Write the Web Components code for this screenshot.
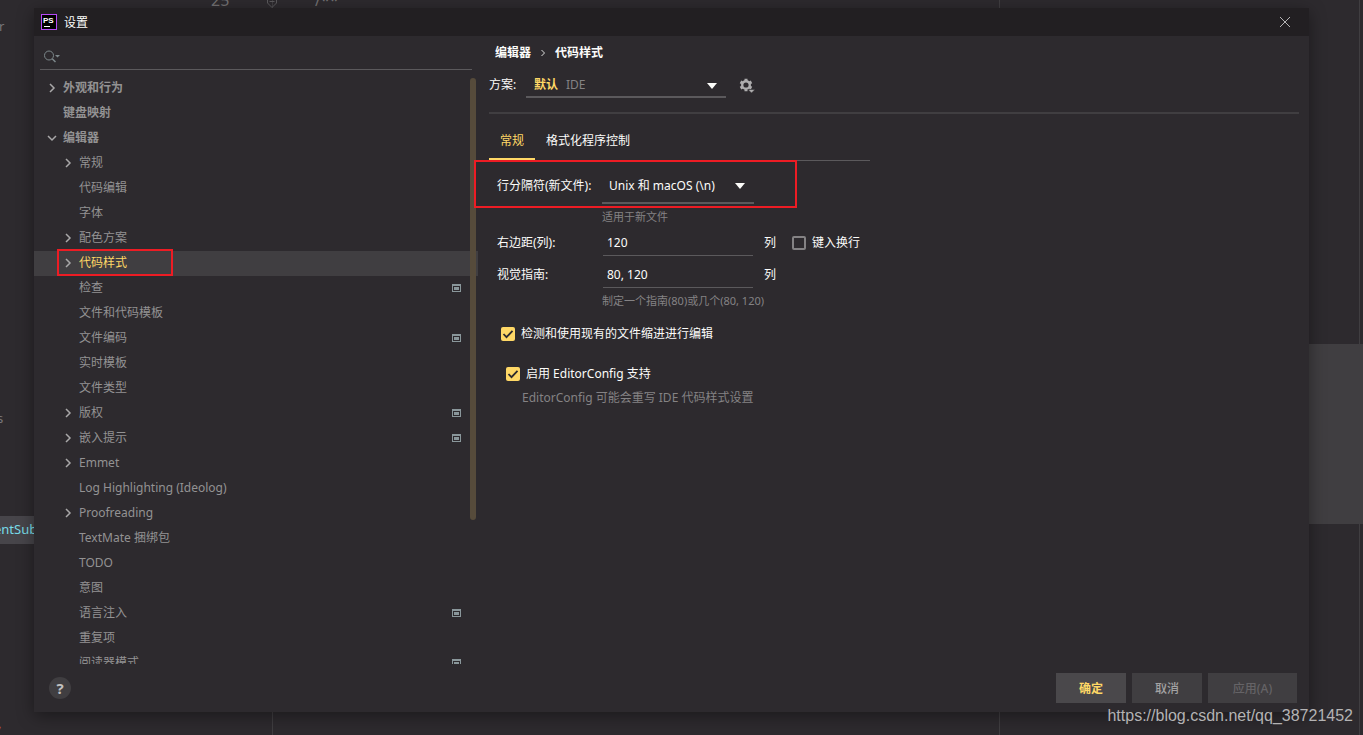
<!DOCTYPE html>
<html lang="zh-CN">
<head>
<meta charset="utf-8">
<meta name="viewport" content="width=device-width, initial-scale=1">
<title>设置</title>
<style>
html, body { height: 100%; }
body {
  margin: 0;
  overflow: hidden;
  background: #2d2a2e;
  color: #fcfcfa;
  font: 12px/20px "Noto Sans", "Noto Sans CJK SC", sans-serif;
  --bg: #2d2a2e;
  --title: #221f22;
  --line: #5b595c;
  --soft: #403e41;
  --muted: #939293;
  --accent: #ffd866;
  --mark: #ed1c24;
}
</style>
</head>
<body>
<ide-screen>
  <editor-backdrop slot="back"></editor-backdrop>
  <settings-dialog slot="dialog">
    <search-field slot="side"></search-field>
    <settings-tree slot="side">
      <tree-row top arrow="right">外观和行为</tree-row>
      <tree-row top>键盘映射</tree-row>
      <tree-row top arrow="down">编辑器</tree-row>
      <tree-row arrow="right">常规</tree-row>
      <tree-row>代码编辑</tree-row>
      <tree-row>字体</tree-row>
      <tree-row arrow="right">配色方案</tree-row>
      <tree-row arrow="right" selected>代码样式</tree-row>
      <tree-row project>检查</tree-row>
      <tree-row>文件和代码模板</tree-row>
      <tree-row project>文件编码</tree-row>
      <tree-row>实时模板</tree-row>
      <tree-row>文件类型</tree-row>
      <tree-row arrow="right" project>版权</tree-row>
      <tree-row arrow="right" project>嵌入提示</tree-row>
      <tree-row arrow="right">Emmet</tree-row>
      <tree-row>Log Highlighting (Ideolog)</tree-row>
      <tree-row arrow="right">Proofreading</tree-row>
      <tree-row>TextMate 捆绑包</tree-row>
      <tree-row>TODO</tree-row>
      <tree-row>意图</tree-row>
      <tree-row project>语言注入</tree-row>
      <tree-row>重复项</tree-row>
      <tree-row project>阅读器模式</tree-row>
    </settings-tree>
    <scheme-header slot="main"></scheme-header>
    <tab-strip slot="main"></tab-strip>
    <style-form slot="main"></style-form>
    <dialog-footer slot="footer"></dialog-footer>
  </settings-dialog>
  <a slot="credit" href="https://blog.csdn.net/qq_38721452">https://blog.csdn.net/qq_38721452</a>
</ide-screen>

<script>
const define = (name, html, setup) => customElements.define(name, class extends HTMLElement {
  constructor() {
    super();
    this.attachShadow({ mode: "open" }).innerHTML = html;
  }
  connectedCallback() { if (setup) setup(this, this.shadowRoot); }
});

define("ide-screen", `
<style>
:host { display: grid; grid-template: 100vh / 100%; position: relative; }
::slotted([slot=back]), ::slotted([slot=dialog]) { grid-area: 1 / 1; }
::slotted([slot=dialog]) { margin: 8px 54px 23px 34px; }
::slotted(a) {
  position: absolute; right: 10px; bottom: 8px; z-index: 2;
  font: 16px/22px "Liberation Sans", Arial, sans-serif;
  color: #b4b3b4; text-decoration: none;
}
</style>
<slot name="back"></slot><slot name="dialog"></slot><slot name="credit"></slot>`);

define("editor-backdrop", `
<style>
:host { display: grid; grid-template-columns: 273px 727px 1fr 3px; position: relative; color: #727072; overflow: hidden; }
div { box-sizing: border-box; overflow: hidden; }
.project, .left, .right { border-right: 1px solid #403e41; }
.project { color: #78767a; font-size: 13px; display: grid; grid-template-rows: 16px 20px 372px 20px 88px 28px 173px 1fr; }
.r { grid-row: 2; text-indent: -1px; } .s { grid-row: 4; text-indent: -3px; } .v { grid-row: 8; color: #c0624a; line-height: 12px; text-indent: -2px; }
.sub { grid-row: 6; background: #47454a; color: #78dce8; line-height: 27px; text-indent: -6px; }
.num { position: absolute; left: 211px; top: -10px; font: 16px/20px "Noto Sans", sans-serif; }
.fold { position: absolute; left: 266px; top: -4px; }
.code { margin: -10px 0 0 42px; font: 16px/20px "Noto Sans", sans-serif; }
.band { margin-top: 344px; height: 180px; background: #403e41; }
</style>
<div class="project"><span class="r">r</span><span class="s">s</span><span class="sub">entSub</span><span class="v">,</span></div>
<div class="left"><div class="code">/**</div></div>
<div class="right"><div class="band"></div></div>
<div class="end"><div class="band"></div></div>
<span class="num">25</span>
<svg class="fold" width="12" height="12" fill="none" stroke="#5b595c"><path d="M1.500 0v7l4.500 4.500 4.500-4.500V0M3.500 5.500h5"/></svg>`);

define("settings-dialog", `
<style>
:host {
  display: grid; grid-template: 28px 1fr 48px / 444px 1fr; min-height: 0;
  background: var(--bg); box-shadow: 0 4px 16px rgba(0,0,0,.4); z-index: 1;
}
header { grid-column: 1 / 3; display: flex; align-items: center; gap: 7px; padding: 0 18px 0 7px; background: var(--title); }
h1 { flex: 1; margin: 0; padding-top: 2px; font-size: 12px; font-weight: 400; }
button { all: unset; width: 12px; height: 12px; display: flex; }
aside { display: flex; flex-direction: column; min-height: 0; }
main { padding: 7px 10px 0 11px; min-width: 0; }
footer { grid-column: 1 / 3; }
</style>
<header>
  <svg width="16" height="16" viewBox="0 0 16 16"><rect x=".5" y=".5" width="15" height="15" fill="#000" stroke="#b74af7"/><text x="2" y="9" font-family="Liberation Sans" font-weight="700" font-size="8" fill="#fff">PS</text><path d="M3 12.500h6" stroke="#fff"/></svg>
  <h1>设置</h1>
  <button aria-label="关闭"><svg width="12" height="12" fill="none" stroke="#b5b4b5"><path d="M1 1l10 10M11 1L1 11"/></svg></button>
</header>
<aside><slot name="side"></slot></aside>
<main><slot name="main"></slot></main>
<footer><slot name="footer"></slot></footer>`);

define("search-field", `
<style>
:host { display: block; margin: 0 6px; }
label { display: flex; align-items: center; height: 33px; padding: 6px 0 0 4px; box-sizing: border-box; }
div { border-bottom: 1px solid var(--line); }
input { all: unset; flex: 1; color: #fcfcfa; }
svg { margin-top: 2px; }
</style>
<div><label><svg width="18" height="14" fill="none" stroke="#7d888b"><circle cx="5" cy="5.500" r="4.500"/><path d="M8.200 8.700l3.300 3.300" stroke-width="1.500"/><path d="M11 5h5l-2.500 2.500z" fill="#7d888b" stroke="none"/></svg><input type="search" aria-label="搜索设置"></label></div>`);

define("settings-tree", `
<style>
:host { display: block; position: relative; flex: 1; min-height: 0; margin-top: 6px; overflow: hidden; }
.thumb { position: absolute; right: 2px; top: 2px; width: 6px; height: 442px; border-radius: 3px; background: #564b3b; }
</style>
<div role="tree" aria-label="设置类别"><slot></slot></div><div class="thumb"></div>`);

define("tree-row", `
<style>
:host { display: flex; align-items: center; box-sizing: border-box; height: 25px; padding: 0 17px 2px 26px; color: var(--muted); position: relative; }
:host([top]) { padding-left: 10px; font-weight: 700; }
:host([selected]) { background: var(--soft); color: var(--accent); }
.arrow { width: 16px; height: 16px; margin-right: 3px; fill: none; stroke: #a9a8a9; stroke-width: 1.500; }
.arrow path, .mod, .ring { display: none; }
:host([arrow=right]) .right, :host([arrow=down]) .down, :host([project]) .mod, :host([selected]) .ring { display: block; }
.text { flex: 1; }
.ring { position: absolute; left: 23px; top: -2px; width: 116px; height: 27px; box-sizing: border-box; border: 2px solid var(--mark); }
</style>
<svg class="arrow"><path class="right" d="M6 4l4 4-4 4"/><path class="down" d="M4 6l4 4 4-4"/></svg>
<span class="text"><slot></slot></span>
<svg class="mod" width="9" height="8"><path d="M0 0h9v8H0zM1 2v5h7V2z" fill="#8a979b" fill-rule="evenodd"/><path d="M2 3h5v3H2z" fill="#8a979b"/></svg>
<span class="ring"></span>`, (host, root) => {
  host.setAttribute("role", "treeitem");
  if (host.hasAttribute("selected")) host.setAttribute("aria-selected", "true");
});

define("scheme-header", `
<style>
:host { display: block; border-bottom: 2px solid var(--soft); }
nav { display: flex; align-items: center; gap: 9px; height: 20px; padding-left: 6px; font-weight: 700; }
.row { display: flex; height: 28px; margin-top: 7px; padding-bottom: 14px; }
label { width: 37px; line-height: 30px; }
.box { position: relative; width: 200px; }
select { appearance: none; width: 100%; height: 28px; padding: 3px 8px 0; border: 0; border-bottom: 2px solid var(--line); background: none; color: var(--accent); font: inherit; font-weight: 700; box-sizing: border-box; }
.kind { position: absolute; left: 40px; top: 5px; color: #848284; pointer-events: none; }
.caret { position: absolute; right: 9px; top: 13px; pointer-events: none; }
button { all: unset; margin: 7px 0 0 13px; width: 16px; height: 16px; }
</style>
<nav aria-label="位置"><span>编辑器</span><svg width="6" height="8" fill="none" stroke="#dddddc"><path d="M1.500 1l3 3-3 3"/></svg><span>代码样式</span></nav>
<div class="row">
  <label for="scheme">方案:</label>
  <div class="box"><select id="scheme"><option>默认</option></select><span class="kind">IDE</span><svg class="caret" width="10" height="6"><path d="M0 0h10L5 6z" fill="#fcfcfa"/></svg></div>
  <button aria-label="方案操作"><svg width="17" height="16"><g fill="none" stroke="#aeadae"><circle cx="7" cy="8" r="3.800" stroke-width="2.400"/><path d="M7 1.700v2M7 12.300v2M1.500 4.900l1.800 1M10.700 10.100l1.800 1M1.500 11.100l1.800-1M10.700 5.900l1.800-1" stroke-width="3"/></g><path d="M9 12.500h7l-3.500 3.500z" fill="#aeadae" stroke="#2d2a2e" stroke-width=".5"/></svg></button>
</div>`);

define("tab-strip", `
<style>
:host { display: flex; width: 381px; margin-top: 6px; border-bottom: 1px solid var(--line); }
button { all: unset; height: 38px; line-height: 42px; padding: 0 11px; border-bottom: 2px solid transparent; }
[aria-selected=true] { color: var(--accent); border-color: var(--accent); }
</style>
<button role="tab" aria-selected="true">常规</button><button role="tab" aria-selected="false">格式化程序控制</button>`);

define("check-box", `
<style>
:host { display: block; }
label { display: flex; align-items: center; gap: 6px; height: 20px; }
input { appearance: none; width: 14px; height: 14px; margin: 0; border: 2px solid #848284; border-radius: 2px; box-sizing: border-box; display: grid; }
input:checked { border: 0; background: var(--accent); }
svg { display: none; position: absolute; pointer-events: none; }
input:checked + svg { display: block; }
</style>
<label><input type="checkbox"><svg width="14" height="14" fill="none" stroke="#2d2a2e" stroke-width="1.800"><path d="M2.500 7l3 3.200 6-6.400"/></svg><span><slot></slot></span></label>`, (host, root) => {
  root.querySelector("input").checked = host.hasAttribute("checked");
});

define("style-form", `
<style>
:host { display: block; position: relative; padding: 9px 0 0 8px; }
.grid { display: grid; grid-template-columns: 105px 152px 1fr; }
.hint { grid-column: 2 / 4; font-size: 11px; color: #848284; height: 26px; line-height: 26px; }
.grid label { line-height: 32px; }
.pick { position: relative; }
select { appearance: none; width: 152px; height: 34px; padding: 0 7px; border: 0; border-bottom: 2px solid var(--line); background: none; color: inherit; font: inherit; box-sizing: border-box; }
.caret { position: absolute; right: 9px; top: 13px; pointer-events: none; }
.grid .field { line-height: 26px; }
.line { height: 26px; margin: 0 1px 6px; padding: 0 4px; border: 0; border-bottom: 1px solid var(--line); background: none; color: inherit; font: inherit; box-sizing: border-box; }
.unit { display: flex; gap: 16px; height: 26px; align-items: center; padding-left: 10px; }
.grid .last { height: 14px; line-height: 14px; }
.a { margin: 16px 0 0 4px; }
.b { margin: 20px 0 0 9px; }
.note { margin: 4px 0 0 25px; color: #848284; }
.mark { position: absolute; left: -15px; top: -1px; width: 323px; height: 48px; box-sizing: border-box; border: 2px solid var(--mark); pointer-events: none; }
</style>
<div class="grid">
  <label for="eol">行分隔符(新文件):</label>
  <div class="pick"><select id="eol"><option>Unix 和 macOS (\\n)</option></select><svg class="caret" width="10" height="6"><path d="M0 0h10L5 6z" fill="#fcfcfa"/></svg></div><span></span>
  <div class="hint">适用于新文件</div>
  <label class="field" for="margin">右边距(列):</label>
  <input class="line" id="margin" value="120"><div class="unit"><span>列</span><check-box>键入换行</check-box></div>
  <label class="field" for="guides">视觉指南:</label>
  <input class="line" id="guides" value="80, 120"><div class="unit"><span>列</span></div>
  <div class="hint last">制定一个指南(80)或几个(80, 120)</div>
</div>
<check-box class="a" checked>检测和使用现有的文件缩进进行编辑</check-box>
<check-box class="b" checked>启用 EditorConfig 支持</check-box>
<div class="note">EditorConfig 可能会重写 IDE 代码样式设置</div>
<div class="mark"></div>`);

define("dialog-footer", `
<style>
:host { display: flex; align-items: center; gap: 6px; height: 48px; padding: 0 12px 0 15px; }
button { all: unset; width: 70px; height: 30px; line-height: 32px; text-align: center; background: var(--soft); color: #a3a2a3; font-weight: 500; }
.help { width: 22px; height: 22px; border-radius: 11px; margin-right: auto; font-size: 15px; line-height: 22px; font-weight: 700; color: #c1c0c0; }
.ok { background: #4a484b; color: var(--accent); font-weight: 700; }
.wide { width: 89px; color: #656366; }
</style>
<button class="help" aria-label="帮助">?</button>
<button class="ok">确定</button><button>取消</button><button class="wide" aria-disabled="true">应用(A)</button>`);
</script>
</body>
</html>
